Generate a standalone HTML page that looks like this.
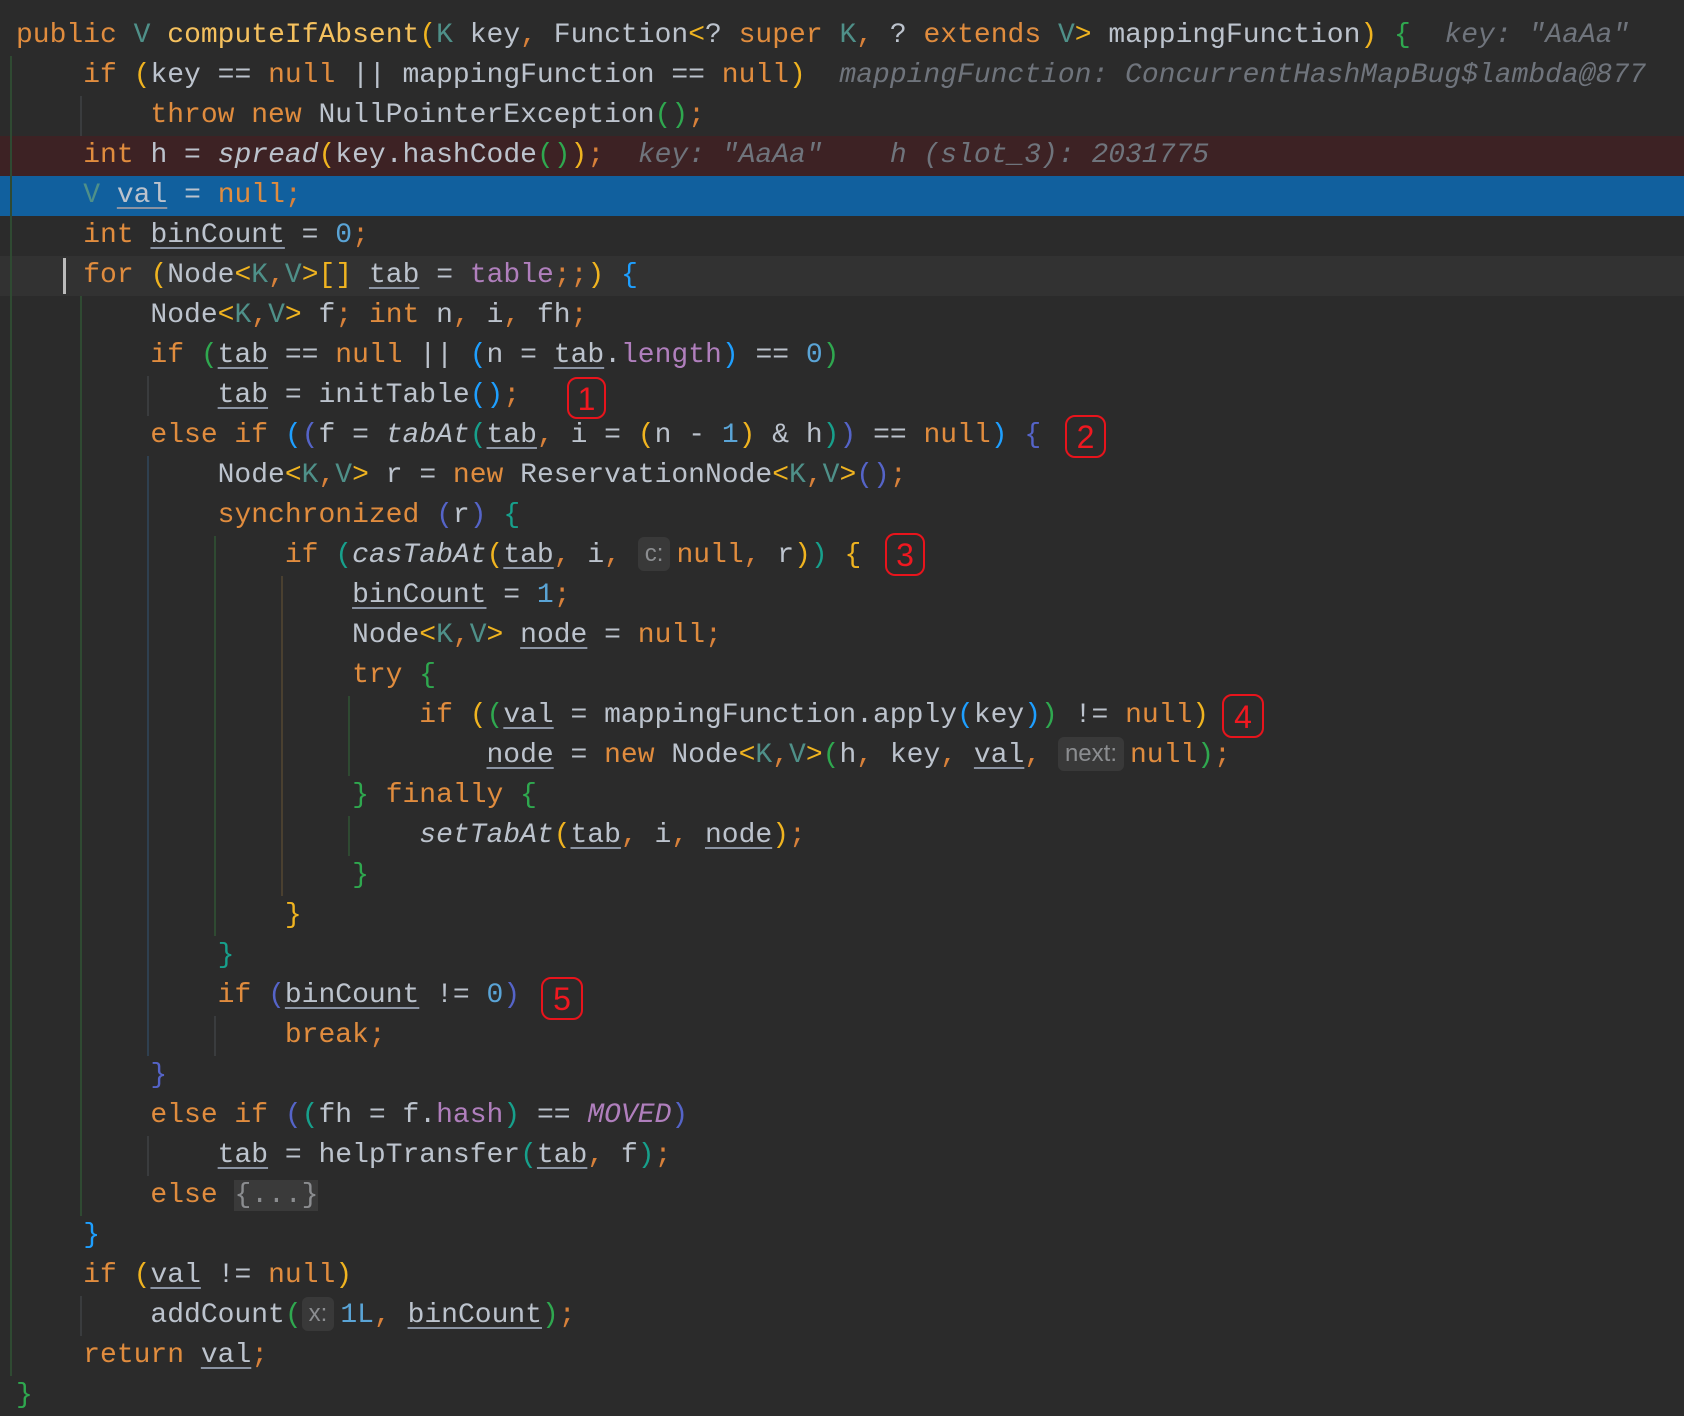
<!DOCTYPE html>
<html><head><meta charset="utf-8"><style>
html,body{margin:0;padding:0;background:#2b2b2b;width:1684px;height:1398px;overflow:hidden}
#w{position:absolute;left:0;top:2px;width:1684px;height:1398px}
.l{position:absolute;left:0;width:1684px;height:40px;line-height:40px;white-space:pre;font-family:"Liberation Mono",monospace;font-size:28px;color:#bcc3cd}
.l>span.t0{position:absolute;left:16px;top:0}
.k{color:#e08c3e}.o{color:#d8813a}.t{color:#4f9089}.m{color:#f5c15e}.f{color:#b07fbd}.n{color:#5aa4d6}
.h{color:#6f747c;font-style:italic}.it{font-style:italic}.u{text-decoration:underline;text-decoration-color:#8a93a3;text-underline-offset:5px;text-decoration-thickness:2px}
.y{color:#f0b420}.g{color:#2fa84f}.b{color:#1e9fff}.c{color:#17a08c}.v{color:#5564c8}
.hint{display:inline-block;font-family:"Liberation Sans",sans-serif;font-style:normal;font-size:24px;color:#8b8d90;background:#393939;border-radius:6px;line-height:34px;padding:0 7px;margin-right:6px;vertical-align:1px}
.g1{position:absolute;width:2px;background:#3a3c3e}
.box{position:absolute;border:2px solid #e8141c;border-radius:10px;box-sizing:border-box;color:#f01820;font-family:"Liberation Sans",sans-serif;font-size:32px;text-align:center}
</style></head><body><div id="w">
<div style="position:absolute;left:0;top:134px;width:1684px;height:40px;background:#3d2224"></div>
<div style="position:absolute;left:0;top:174px;width:1684px;height:40px;background:#11609e"></div>
<div style="position:absolute;left:0;top:254px;width:1684px;height:40px;background:#323232"></div>
<div style="position:absolute;left:63px;top:256px;width:3px;height:36px;background:#bbb"></div>
<div class="g1" style="left:10px;top:54px;height:1320px;background:#2f4a32"></div>
<div class="g1" style="left:80px;top:294px;height:920px;background:#2f4a32"></div>
<div class="g1" style="left:80px;top:94px;height:40px"></div>
<div class="g1" style="left:147px;top:374px;height:40px"></div>
<div class="g1" style="left:147px;top:454px;height:600px;background:#2f4050"></div>
<div class="g1" style="left:214px;top:534px;height:400px;background:#2f4a32"></div>
<div class="g1" style="left:281px;top:574px;height:320px;background:#4a4030"></div>
<div class="g1" style="left:348px;top:694px;height:80px;background:#2f4a32"></div>
<div class="g1" style="left:348px;top:814px;height:40px;background:#2f4a32"></div>
<div class="g1" style="left:214px;top:1014px;height:40px"></div>
<div class="g1" style="left:147px;top:1134px;height:40px"></div>
<div class="g1" style="left:80px;top:1294px;height:40px"></div>

<div class="l" style="top:14px"><span class="t0"><span class="k">public</span> <span class="t">V</span> <span class="m">computeIfAbsent</span><span class="y">(</span><span class="t">K</span> key<span class="o">,</span> Function<span class="y">&lt;</span>? <span class="k">super</span> <span class="t">K</span><span class="o">,</span> ? <span class="k">extends</span> <span class="t">V</span><span class="y">&gt;</span> mappingFunction<span class="y">)</span> <span class="g">{</span>  <span class="h">key: "AaAa"</span></span></div>
<div class="l" style="top:54px"><span class="t0">    <span class="k">if</span> <span class="y">(</span>key == <span class="k">null</span> || mappingFunction == <span class="k">null</span><span class="y">)</span>  <span class="h">mappingFunction: ConcurrentHashMapBug$lambda@877</span></span></div>
<div class="l" style="top:94px"><span class="t0">        <span class="k">throw new</span> NullPointerException<span class="g">()</span><span class="o">;</span></span></div>
<div class="l" style="top:134px"><span class="t0">    <span class="k">int</span> h = <span class="it">spread</span><span class="y">(</span>key.hashCode<span class="g">()</span><span class="y">)</span><span class="o">;</span>  <span class="h">key: "AaAa"    h (slot_3): 2031775</span></span></div>
<div class="l" style="top:174px"><span class="t0">    <span class="t">V</span> <span class="u">val</span> = <span class="k">null</span><span class="o">;</span></span></div>
<div class="l" style="top:214px"><span class="t0">    <span class="k">int</span> <span class="u">binCount</span> = <span class="n">0</span><span class="o">;</span></span></div>
<div class="l" style="top:254px"><span class="t0">    <span class="k">for</span> <span class="y">(</span>Node<span class="y">&lt;</span><span class="t">K</span><span class="o">,</span><span class="t">V</span><span class="y">&gt;[]</span> <span class="u">tab</span> = <span class="f">table</span><span class="o">;;</span><span class="y">)</span> <span class="b">{</span></span></div>
<div class="l" style="top:294px"><span class="t0">        Node<span class="y">&lt;</span><span class="t">K</span><span class="o">,</span><span class="t">V</span><span class="y">&gt;</span> f<span class="o">;</span> <span class="k">int</span> n<span class="o">,</span> i<span class="o">,</span> fh<span class="o">;</span></span></div>
<div class="l" style="top:334px"><span class="t0">        <span class="k">if</span> <span class="g">(</span><span class="u">tab</span> == <span class="k">null</span> || <span class="b">(</span>n = <span class="u">tab</span>.<span class="f">length</span><span class="b">)</span> == <span class="n">0</span><span class="g">)</span></span></div>
<div class="l" style="top:374px"><span class="t0">            <span class="u">tab</span> = initTable<span class="b">()</span><span class="o">;</span></span></div>
<div class="l" style="top:414px"><span class="t0">        <span class="k">else if</span> <span class="b">(</span><span class="v">(</span>f = <span class="it">tabAt</span><span class="c">(</span><span class="u">tab</span><span class="o">,</span> i = <span class="y">(</span>n - <span class="n">1</span><span class="y">)</span> &amp; h<span class="c">)</span><span class="v">)</span> == <span class="k">null</span><span class="b">)</span> <span class="v">{</span></span></div>
<div class="l" style="top:454px"><span class="t0">            Node<span class="y">&lt;</span><span class="t">K</span><span class="o">,</span><span class="t">V</span><span class="y">&gt;</span> r = <span class="k">new</span> ReservationNode<span class="y">&lt;</span><span class="t">K</span><span class="o">,</span><span class="t">V</span><span class="y">&gt;</span><span class="v">()</span><span class="o">;</span></span></div>
<div class="l" style="top:494px"><span class="t0">            <span class="k">synchronized</span> <span class="v">(</span>r<span class="v">)</span> <span class="c">{</span></span></div>
<div class="l" style="top:534px"><span class="t0">                <span class="k">if</span> <span class="c">(</span><span class="it">casTabAt</span><span class="y">(</span><span class="u">tab</span><span class="o">,</span> i<span class="o">,</span> <span class="hint">c:</span><span class="k">null</span><span class="o">,</span> r<span class="y">)</span><span class="c">)</span> <span class="y">{</span></span></div>
<div class="l" style="top:574px"><span class="t0">                    <span class="u">binCount</span> = <span class="n">1</span><span class="o">;</span></span></div>
<div class="l" style="top:614px"><span class="t0">                    Node<span class="y">&lt;</span><span class="t">K</span><span class="o">,</span><span class="t">V</span><span class="y">&gt;</span> <span class="u">node</span> = <span class="k">null</span><span class="o">;</span></span></div>
<div class="l" style="top:654px"><span class="t0">                    <span class="k">try</span> <span class="g">{</span></span></div>
<div class="l" style="top:694px"><span class="t0">                        <span class="k">if</span> <span class="y">(</span><span class="g">(</span><span class="u">val</span> = mappingFunction.apply<span class="b">(</span>key<span class="b">)</span><span class="g">)</span> != <span class="k">null</span><span class="y">)</span></span></div>
<div class="l" style="top:734px"><span class="t0">                            <span class="u">node</span> = <span class="k">new</span> Node<span class="y">&lt;</span><span class="t">K</span><span class="o">,</span><span class="t">V</span><span class="y">&gt;</span><span class="g">(</span>h<span class="o">,</span> key<span class="o">,</span> <span class="u">val</span><span class="o">,</span> <span class="hint">next:</span><span class="k">null</span><span class="g">)</span><span class="o">;</span></span></div>
<div class="l" style="top:774px"><span class="t0">                    <span class="g">}</span> <span class="k">finally</span> <span class="g">{</span></span></div>
<div class="l" style="top:814px"><span class="t0">                        <span class="it">setTabAt</span><span class="y">(</span><span class="u">tab</span><span class="o">,</span> i<span class="o">,</span> <span class="u">node</span><span class="y">)</span><span class="o">;</span></span></div>
<div class="l" style="top:854px"><span class="t0">                    <span class="g">}</span></span></div>
<div class="l" style="top:894px"><span class="t0">                <span class="y">}</span></span></div>
<div class="l" style="top:934px"><span class="t0">            <span class="c">}</span></span></div>
<div class="l" style="top:974px"><span class="t0">            <span class="k">if</span> <span class="v">(</span><span class="u">binCount</span> != <span class="n">0</span><span class="v">)</span></span></div>
<div class="l" style="top:1014px"><span class="t0">                <span class="k">break</span><span class="o">;</span></span></div>
<div class="l" style="top:1054px"><span class="t0">        <span class="v">}</span></span></div>
<div class="l" style="top:1094px"><span class="t0">        <span class="k">else if</span> <span class="v">(</span><span class="c">(</span>fh = f.<span class="f">hash</span><span class="c">)</span> == <span class="f it">MOVED</span><span class="v">)</span></span></div>
<div class="l" style="top:1134px"><span class="t0">            <span class="u">tab</span> = helpTransfer<span class="c">(</span><span class="u">tab</span><span class="o">,</span> f<span class="c">)</span><span class="o">;</span></span></div>
<div class="l" style="top:1174px"><span class="t0">        <span class="k">else</span> <span style="background:#3a3a3a;color:#8b8d90">{...}</span></span></div>
<div class="l" style="top:1214px"><span class="t0">    <span class="b">}</span></span></div>
<div class="l" style="top:1254px"><span class="t0">    <span class="k">if</span> <span class="y">(</span><span class="u">val</span> != <span class="k">null</span><span class="y">)</span></span></div>
<div class="l" style="top:1294px"><span class="t0">        addCount<span class="g">(</span><span class="hint">x:</span><span class="n">1L</span><span class="o">,</span> <span class="u">binCount</span><span class="g">)</span><span class="o">;</span></span></div>
<div class="l" style="top:1334px"><span class="t0">    <span class="k">return</span> <span class="u">val</span><span class="o">;</span></span></div>
<div class="l" style="top:1374px"><span class="t0"><span class="g">}</span></span></div>

<div class="box" style="left:567px;top:375px;width:39px;height:42px;line-height:40px">1</div>
<div class="box" style="left:1065px;top:413px;width:41px;height:43px;line-height:41px">2</div>
<div class="box" style="left:885px;top:531px;width:40px;height:43px;line-height:41px">3</div>
<div class="box" style="left:1222px;top:692px;width:42px;height:44px;line-height:42px">4</div>
<div class="box" style="left:541px;top:975px;width:42px;height:43px;line-height:41px">5</div>
</div></body></html>
